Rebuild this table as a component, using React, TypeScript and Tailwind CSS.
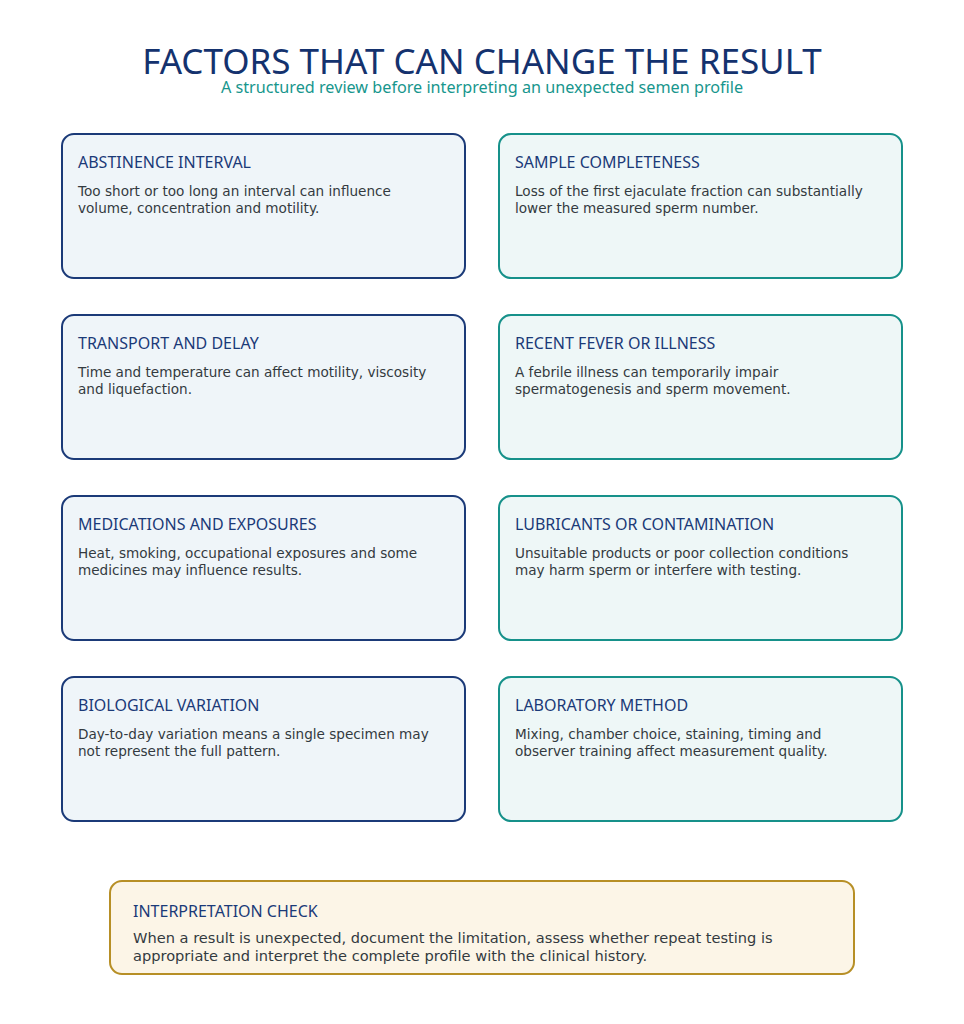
const factors = [
  {
    title: 'ABSTINENCE INTERVAL',
    text: 'Too short or too long an interval can influence volume, concentration and motility.',
  },
  {
    title: 'SAMPLE COMPLETENESS',
    text: 'Loss of the first ejaculate fraction can substantially lower the measured sperm number.',
  },
  {
    title: 'TRANSPORT AND DELAY',
    text: 'Time and temperature can affect motility, viscosity and liquefaction.',
  },
  {
    title: 'RECENT FEVER OR ILLNESS',
    text: 'A febrile illness can temporarily impair spermatogenesis and sperm movement.',
  },
  {
    title: 'MEDICATIONS AND EXPOSURES',
    text: 'Heat, smoking, occupational exposures and some medicines may influence results.',
  },
  {
    title: 'LUBRICANTS OR CONTAMINATION',
    text: 'Unsuitable products or poor collection conditions may harm sperm or interfere with testing.',
  },
  {
    title: 'BIOLOGICAL VARIATION',
    text: 'Day-to-day variation means a single specimen may not represent the full pattern.',
  },
  {
    title: 'LABORATORY METHOD',
    text: 'Mixing, chamber choice, staining, timing and observer training affect measurement quality.',
  },
]

export default function App() {
  return (
    <div className="w-[964px] h-[1024px] bg-white flex flex-col items-center">
      {/* Header */}
      <h1 className="mt-[43px] text-[35px] leading-[36px] text-[#14326e] font-['Noto_Sans',sans-serif]">
        FACTORS THAT CAN CHANGE THE RESULT
      </h1>
      <p className="text-[16.2px] leading-[16px] text-[#17968d] font-['Noto_Sans',sans-serif]">
        A structured review before interpreting an unexpected semen profile
      </p>

      {/* Cards */}
      <div className="mt-[38px] grid grid-cols-2 gap-x-[32px] gap-y-[35px] w-[842px]">
        {factors.map((f, i) => (
          <div
            key={f.title}
            className={`h-[146px] rounded-[13px] border-2 pl-[15px] pr-[24px] pt-[16px] ${
              i % 2 === 0 ? 'border-[#1b3a78] bg-[#eff5f9]' : 'border-[#16918a] bg-[#eef7f7]'
            }`}
          >
            <h2 className="text-[16px] leading-[22px] text-[#1b3a78] font-['Noto_Sans',sans-serif]">
              {f.title}
            </h2>
            <p className="mt-[10px] text-[13.6px] leading-[17px] text-[#333a40] font-['DejaVu_Sans',sans-serif]">
              {f.text}
            </p>
          </div>
        ))}
      </div>

      {/* Interpretation check */}
      <div className="mt-[58px] w-[746px] h-[95px] rounded-[13px] border-2 border-[#b78f26] bg-[#fcf5e7] pl-[22px] pr-[20px] pt-[18px]">
        <h2 className="text-[16px] leading-[22px] text-[#1b3a78] font-['Noto_Sans',sans-serif]">
          INTERPRETATION CHECK
        </h2>
        <p className="mt-[7px] text-[14.6px] leading-[18px] text-[#333a40] font-['DejaVu_Sans',sans-serif]">
          When a result is unexpected, document the limitation, assess whether repeat testing is appropriate and interpret the complete profile with the clinical history.
        </p>
      </div>
    </div>
  )
}
